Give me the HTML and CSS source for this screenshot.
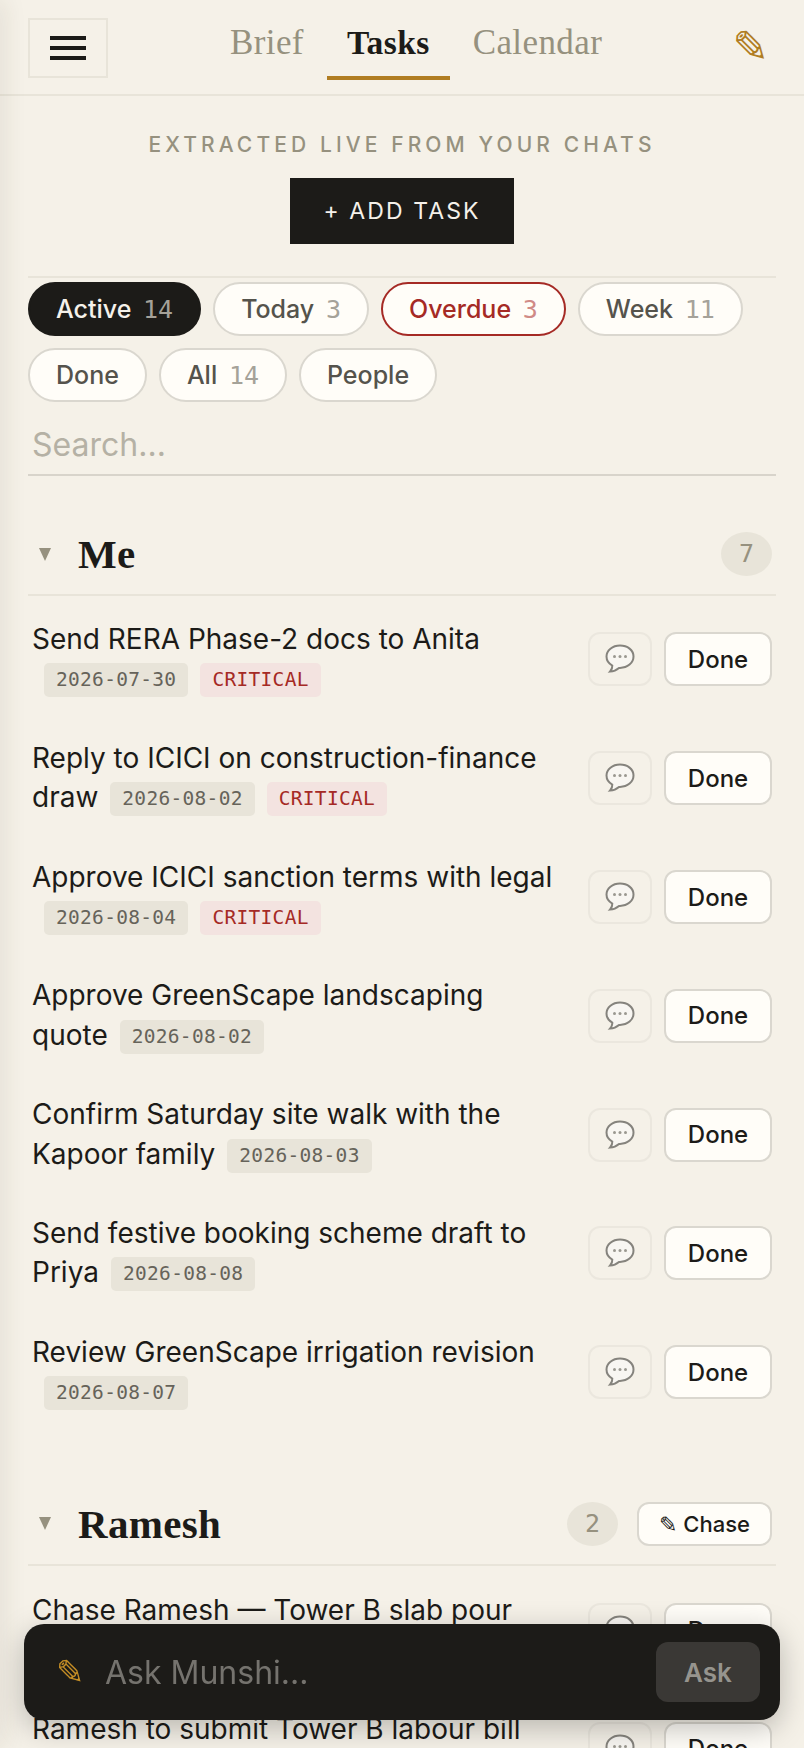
FILE: index.html
```html
<!DOCTYPE html>
<html lang="en">

<head>
  <meta charset="UTF-8">
  <meta name="viewport" content="width=device-width, initial-scale=1.0">
  <title>Tasks</title>
  <link rel="stylesheet" href="styles.css">
</head>

<body>
  <div class="page">
    <header class="topbar">
      <button class="menu-btn" aria-label="Menu"><span></span><span></span><span></span></button>
      <nav class="tabs">
        <a class="tab" href="#">Brief</a>
        <a class="tab tab-active" href="#">Tasks</a>
        <a class="tab" href="#">Calendar</a>
      </nav>
      <span class="top-pencil">✎</span>
    </header>

    <main class="content">
      <p class="subtitle">EXTRACTED LIVE FROM YOUR CHATS</p>
      <div class="add-wrap"><button class="add-btn">+ ADD TASK</button></div>

      <div class="pills">
        <button class="pill pill-active">Active <span class="num">14</span></button>
        <button class="pill">Today <span class="num">3</span></button>
        <button class="pill pill-overdue">Overdue <span class="num">3</span></button>
        <button class="pill">Week <span class="num">11</span></button>
        <button class="pill">Done</button>
        <button class="pill">All <span class="num">14</span></button>
        <button class="pill">People</button>
      </div>

      <input class="search" type="text" placeholder="Search...">

      <section class="group">
        <div class="group-head">
          <span class="caret"></span>
          <h2 class="group-name">Me</h2>
          <span class="group-count">7</span>
        </div>
        <ul class="task-list">
          <li class="task">
            <div class="task-text">Send RERA Phase-2 docs to Anita<span class="tag">2026-07-30</span><span class="tag tag-critical">CRITICAL</span></div>
            <button class="chat-btn"><svg class="chat-icon" viewBox="0 0 30 30"><path d="M15 1.500C7.500 1.500 1.500 6.400 1.500 12.500c0 3.800 2.300 7.100 5.800 9.100.2 2-.6 4-2.300 6 3.500-.3 6.700-1.700 9-3.700h1c7.500 0 13.500-5 13.500-11.400S22.500 1.500 15 1.500z"/><circle cx="9.500" cy="12.500" r="1.500"/><circle cx="15" cy="12.500" r="1.500"/><circle cx="20.500" cy="12.500" r="1.500"/></svg></button>
            <button class="done-btn">Done</button>
          </li>
          <li class="task">
            <div class="task-text">Reply to ICICI on construction-finance draw<span class="tag">2026-08-02</span><span class="tag tag-critical">CRITICAL</span></div>
            <button class="chat-btn"><svg class="chat-icon" viewBox="0 0 30 30"><path d="M15 1.500C7.500 1.500 1.500 6.400 1.500 12.500c0 3.800 2.300 7.100 5.800 9.100.2 2-.6 4-2.300 6 3.500-.3 6.700-1.700 9-3.700h1c7.500 0 13.500-5 13.500-11.400S22.500 1.500 15 1.500z"/><circle cx="9.500" cy="12.500" r="1.500"/><circle cx="15" cy="12.500" r="1.500"/><circle cx="20.500" cy="12.500" r="1.500"/></svg></button>
            <button class="done-btn">Done</button>
          </li>
          <li class="task">
            <div class="task-text">Approve ICICI sanction terms with legal<span class="tag">2026-08-04</span><span class="tag tag-critical">CRITICAL</span></div>
            <button class="chat-btn"><svg class="chat-icon" viewBox="0 0 30 30"><path d="M15 1.500C7.500 1.500 1.500 6.400 1.500 12.500c0 3.800 2.300 7.100 5.800 9.100.2 2-.6 4-2.300 6 3.500-.3 6.700-1.700 9-3.700h1c7.500 0 13.500-5 13.500-11.400S22.500 1.500 15 1.500z"/><circle cx="9.500" cy="12.500" r="1.500"/><circle cx="15" cy="12.500" r="1.500"/><circle cx="20.500" cy="12.500" r="1.500"/></svg></button>
            <button class="done-btn">Done</button>
          </li>
          <li class="task">
            <div class="task-text">Approve GreenScape landscaping quote<span class="tag">2026-08-02</span></div>
            <button class="chat-btn"><svg class="chat-icon" viewBox="0 0 30 30"><path d="M15 1.500C7.500 1.500 1.500 6.400 1.500 12.500c0 3.800 2.300 7.100 5.800 9.100.2 2-.6 4-2.300 6 3.500-.3 6.700-1.700 9-3.700h1c7.500 0 13.500-5 13.500-11.400S22.500 1.500 15 1.500z"/><circle cx="9.500" cy="12.500" r="1.500"/><circle cx="15" cy="12.500" r="1.500"/><circle cx="20.500" cy="12.500" r="1.500"/></svg></button>
            <button class="done-btn">Done</button>
          </li>
          <li class="task">
            <div class="task-text">Confirm Saturday site walk with the Kapoor family<span class="tag">2026-08-03</span></div>
            <button class="chat-btn"><svg class="chat-icon" viewBox="0 0 30 30"><path d="M15 1.500C7.500 1.500 1.500 6.400 1.500 12.500c0 3.800 2.300 7.100 5.800 9.100.2 2-.6 4-2.300 6 3.500-.3 6.700-1.700 9-3.700h1c7.500 0 13.500-5 13.500-11.400S22.500 1.500 15 1.500z"/><circle cx="9.500" cy="12.500" r="1.500"/><circle cx="15" cy="12.500" r="1.500"/><circle cx="20.500" cy="12.500" r="1.500"/></svg></button>
            <button class="done-btn">Done</button>
          </li>
          <li class="task">
            <div class="task-text">Send festive booking scheme draft to Priya<span class="tag">2026-08-08</span></div>
            <button class="chat-btn"><svg class="chat-icon" viewBox="0 0 30 30"><path d="M15 1.500C7.500 1.500 1.500 6.400 1.500 12.500c0 3.800 2.300 7.100 5.800 9.100.2 2-.6 4-2.300 6 3.500-.3 6.700-1.700 9-3.700h1c7.500 0 13.500-5 13.500-11.400S22.500 1.500 15 1.500z"/><circle cx="9.500" cy="12.500" r="1.500"/><circle cx="15" cy="12.500" r="1.500"/><circle cx="20.500" cy="12.500" r="1.500"/></svg></button>
            <button class="done-btn">Done</button>
          </li>
          <li class="task">
            <div class="task-text">Review GreenScape irrigation revision<span class="tag">2026-08-07</span></div>
            <button class="chat-btn"><svg class="chat-icon" viewBox="0 0 30 30"><path d="M15 1.500C7.500 1.500 1.500 6.400 1.500 12.500c0 3.800 2.300 7.100 5.800 9.100.2 2-.6 4-2.300 6 3.500-.3 6.700-1.700 9-3.700h1c7.500 0 13.500-5 13.500-11.400S22.500 1.500 15 1.500z"/><circle cx="9.500" cy="12.500" r="1.500"/><circle cx="15" cy="12.500" r="1.500"/><circle cx="20.500" cy="12.500" r="1.500"/></svg></button>
            <button class="done-btn">Done</button>
          </li>
        </ul>
      </section>

      <section class="group">
        <div class="group-head">
          <span class="caret"></span>
          <h2 class="group-name">Ramesh</h2>
          <span class="group-count">2</span>
          <button class="chase-btn"><span class="chase-pencil">✎</span> Chase</button>
        </div>
        <ul class="task-list">
          <li class="task">
            <div class="task-text">Chase Ramesh — Tower B slab pour<span class="tag">2026-08-01</span></div>
            <button class="chat-btn"><svg class="chat-icon" viewBox="0 0 30 30"><path d="M15 1.500C7.500 1.500 1.500 6.400 1.500 12.500c0 3.800 2.300 7.100 5.800 9.100.2 2-.6 4-2.300 6 3.500-.3 6.700-1.700 9-3.700h1c7.500 0 13.500-5 13.500-11.400S22.500 1.500 15 1.500z"/><circle cx="9.500" cy="12.500" r="1.500"/><circle cx="15" cy="12.500" r="1.500"/><circle cx="20.500" cy="12.500" r="1.500"/></svg></button>
            <button class="done-btn">Done</button>
          </li>
          <li class="task">
            <div class="task-text">Ramesh to submit Tower B labour bill<span class="tag">2026-08-05</span></div>
            <button class="chat-btn"><svg class="chat-icon" viewBox="0 0 30 30"><path d="M15 1.500C7.500 1.500 1.500 6.400 1.500 12.500c0 3.800 2.300 7.100 5.800 9.100.2 2-.6 4-2.300 6 3.500-.3 6.700-1.700 9-3.700h1c7.500 0 13.500-5 13.500-11.400S22.500 1.500 15 1.500z"/><circle cx="9.500" cy="12.500" r="1.500"/><circle cx="15" cy="12.500" r="1.500"/><circle cx="20.500" cy="12.500" r="1.500"/></svg></button>
            <button class="done-btn">Done</button>
          </li>
        </ul>
      </section>
    </main>
  </div>

  <div class="ask-bar">
    <span class="ask-pencil">✎</span>
    <input class="ask-input" type="text" placeholder="Ask Munshi...">
    <button class="ask-btn">Ask</button>
  </div>

  <div class="drawer-edge"></div>
</body>

</html>
```

FILE: styles.css
```css
html,
body {
  height: 100%;
}

body {
  margin: 0;
  overflow: hidden;
  background-color: #f5f1e8;
  color: #1c1b18;
  font-family: 'Inter', 'Liberation Sans', sans-serif;
}

button,
input {
  font-family: inherit;
}

.page {
  height: 100vh;
  overflow: hidden;
}

.topbar {
  display: flex;
  align-items: flex-start;
  height: 94px;
  padding: 0 28px;
  border-bottom: 2px solid #e8e4d9;
}

.menu-btn {
  display: flex;
  flex-direction: column;
  justify-content: center;
  gap: 6px;
  width: 80px;
  height: 60px;
  margin-top: 18px;
  padding: 0 20px;
  background: none;
  border: 2px solid #e8e4d9;
}

.menu-btn span {
  display: block;
  height: 4px;
  background-color: #1c1b18;
}

.tabs {
  display: flex;
  gap: 3px;
  margin-left: 102px;
}

.tab {
  height: 62px;
  margin-top: 14px;
  padding: 0 20px;
  border-bottom: 4px solid transparent;
  color: #96917f;
  font-family: 'Liberation Serif', serif;
  font-size: 35px;
  letter-spacing: 0.4px;
  line-height: 58px;
  text-decoration: none;
}

.tab-active {
  border-bottom-color: #b07d22;
  color: #1c1b18;
  font-size: 33.500px;
  font-weight: bold;
}

.top-pencil {
  margin-left: auto;
  margin-right: 7px;
  margin-top: 21px;
  color: #b07d22;
  font-family: 'DejaVu Sans', sans-serif;
  font-size: 44px;
  line-height: 52px;
}

.content {
  padding: 0 28px;
}

.subtitle {
  margin: 36px 0 0;
  color: #96917f;
  font-size: 21px;
  font-weight: 500;
  line-height: 26px;
  letter-spacing: 4.1px;
  text-align: center;
}

.add-wrap {
  display: flex;
  justify-content: center;
  margin-top: 20px;
  padding-bottom: 32px;
  border-bottom: 2px solid #e8e4d9;
}

.add-btn {
  width: 224px;
  height: 66px;
  background-color: #1c1b18;
  border: none;
  color: #f5f1ea;
  font-size: 23px;
  letter-spacing: 2.1px;
}

.pills {
  display: flex;
  flex-wrap: wrap;
  gap: 12px;
  margin-top: 4px;
}

.pill {
  height: 54px;
  padding: 0 26px;
  background-color: #fffdf8;
  border: 2px solid #dad7cf;
  border-radius: 27px;
  color: #55534c;
  font-size: 25px;
  font-weight: 500;
}

.num {
  margin-left: 5px;
  color: #a5a299;
  font-family: 'DejaVu Sans Mono', monospace;
  font-size: 25px;
  font-weight: 400;
}

.pill-active {
  background-color: #1c1b18;
  border-color: #1c1b18;
  color: #f5f1ea;
}

.pill-active .num {
  color: #a5a299;
}

.pill-overdue {
  border-color: #a52a25;
  color: #a52a25;
}

.pill-overdue .num {
  color: #d08a86;
}

.search {
  display: block;
  box-sizing: border-box;
  width: 100%;
  height: 61px;
  margin-top: 13px;
  padding: 0 4px;
  background: none;
  border: none;
  border-bottom: 2px solid #d8d4cb;
  color: #1c1b18;
  font-size: 32px;
  outline: none;
}

.search::placeholder {
  color: #b5b1a5;
}

.group {
  margin-top: 38px;
}

.group + .group {
  margin-top: 52px;
}

.group-head {
  display: flex;
  align-items: center;
  height: 80px;
  padding: 0 4px;
  border-bottom: 2px solid #e8e4d9;
}

.caret {
  width: 0;
  height: 0;
  margin-left: 7px;
  border-left: 6.500px solid transparent;
  border-right: 6.500px solid transparent;
  border-top: 13px solid #96917f;
}

.group-name {
  flex: 1;
  margin: 0 0 0 27px;
  font-family: 'Liberation Serif', serif;
  font-size: 41px;
  font-weight: bold;
  letter-spacing: 0.3px;
}

.group-count {
  width: 51px;
  height: 44px;
  border-radius: 50%;
  background-color: #e8e4d9;
  color: #96917f;
  font-family: 'DejaVu Sans Mono', monospace;
  font-size: 25px;
  line-height: 44px;
  text-align: center;
}

.chase-btn {
  height: 44px;
  margin-left: 19px;
  padding: 0 20px;
  background-color: #fffdf8;
  border: 2px solid #dad7cf;
  border-radius: 12px;
  color: #1c1b18;
  font-size: 22px;
  font-weight: 500;
}

.chase-pencil {
  font-family: 'DejaVu Sans', sans-serif;
  font-size: 22px;
}

.task-list {
  list-style: none;
  margin: 0;
  padding: 4px 0 0;
}

.group + .group .task-list {
  padding-top: 5px;
}

.task {
  display: flex;
  align-items: center;
  padding: 20px 4px;
}

.task-text {
  flex: 1;
  font-size: 28px;
  line-height: 39.4px;
}

.tag {
  display: inline-block;
  margin-left: 12px;
  padding: 0 12px;
  background-color: #e8e4d9;
  border-radius: 5px;
  color: #66635a;
  font-family: 'DejaVu Sans Mono', monospace;
  font-size: 19.500px;
  letter-spacing: 0.3px;
  line-height: 34px;
  vertical-align: 2px;
}

.tag-critical {
  background-color: #f3e3e0;
  color: #a52a25;
}

.chat-btn {
  display: flex;
  align-items: center;
  justify-content: center;
  flex-shrink: 0;
  width: 64px;
  height: 54px;
  margin-left: 32px;
  padding: 0;
  background: none;
  border: 2px solid #ebe7de;
  border-radius: 12px;
}

.chat-icon {
  width: 30px;
  height: 30px;
  fill: #f8f6f2;
  stroke: #85837d;
  stroke-width: 2;
}

.chat-icon circle {
  fill: #9a9890;
  stroke: none;
}

.done-btn {
  flex-shrink: 0;
  width: 108px;
  height: 54px;
  margin-left: 12px;
  padding: 0;
  background-color: #fffdf8;
  border: 2px solid #dad7cf;
  border-radius: 12px;
  color: #1c1b18;
  font-size: 24px;
  font-weight: 500;
}

.ask-bar {
  position: fixed;
  left: 24px;
  right: 24px;
  bottom: 28px;
  display: flex;
  align-items: center;
  height: 96px;
  padding: 0 20px 0 32px;
  background-color: #1c1b18;
  border-radius: 20px;
  box-shadow: 0 8px 30px rgba(0, 0, 0, 0.25);
}

.ask-pencil {
  width: 26px;
  color: #c48d25;
  font-family: 'DejaVu Sans', sans-serif;
  font-size: 34px;
}

.ask-input {
  flex: 1;
  min-width: 0;
  margin-left: 23px;
  padding: 0;
  background: none;
  border: none;
  color: #f5f1ea;
  font-size: 32px;
  outline: none;
}

.ask-input::placeholder {
  color: #75736e;
}

.ask-btn {
  width: 104px;
  height: 60px;
  background-color: #3a3835;
  border: none;
  border-radius: 12px;
  color: #96948e;
  font-size: 26px;
  font-weight: 600;
}

.drawer-edge {
  position: fixed;
  top: 0;
  left: -10px;
  width: 10px;
  height: 100%;
  box-shadow: 0 0 24px rgba(60, 50, 30, 0.18);
}
```
